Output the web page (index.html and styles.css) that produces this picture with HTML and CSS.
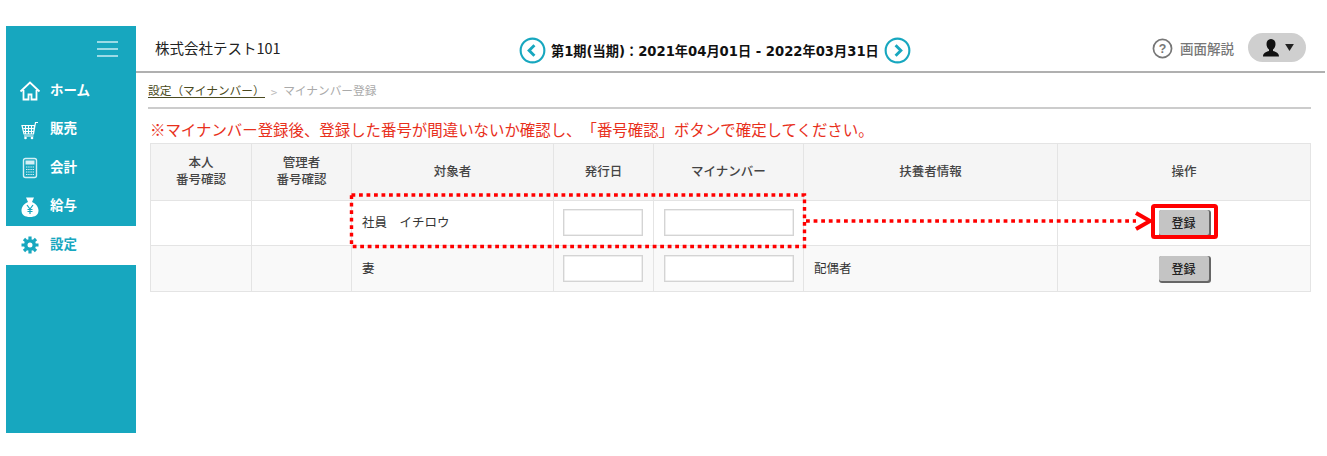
FILE: index.html
```html
<!DOCTYPE html>
<html lang="ja">
<head>
<meta charset="utf-8">
<title>マイナンバー登録</title>
<link rel="stylesheet" href="styles.css">
</head>
<body>
<div class="app">
  <aside class="sidebar">
    <div class="burger"><span></span><span></span><span></span></div>
    <nav class="nav">
      <a class="nav-item"><svg class="nav-icon" viewBox="0 0 22 22"><path d="M1.500 11.500 11 2.500l9.500 9M4.500 10v9.500h5v-5h3v5h5V10" fill="none" stroke="#fff" stroke-width="1.800"/></svg><span>ホーム</span></a>
      <a class="nav-item"><svg class="nav-icon" viewBox="0 0 22 22"><path d="M3 6.500h12.500l-1 8.500H5zM4.500 9.500h10M5 12.500h9.500M6.500 7v8M9.500 7v8M12.500 7v8M5 17h9.500M14.500 15l2-11.500h2.500" fill="none" stroke="#fff" stroke-width="1.200"/><circle cx="6.500" cy="19" r="1.300" fill="#fff"/><circle cx="13" cy="19" r="1.300" fill="#fff"/></svg><span>販売</span></a>
      <a class="nav-item"><svg class="nav-icon" viewBox="0 0 22 22"><rect x="4.500" y="1.500" width="13" height="19" rx="2" fill="none" stroke="#d6f0f5" stroke-width="1.400"/><rect x="6.500" y="3.500" width="9" height="4" fill="#d6f0f5"/><path d="M7 10h8M7 12.500h8M7 15h8M7 17.500h8" stroke="#d6f0f5" stroke-width="1.200" stroke-dasharray="1.400 .8"/></svg><span>会計</span></a>
      <a class="nav-item"><svg class="nav-icon" viewBox="0 0 22 22"><path d="M7 1.500h8l-2 4.500c4 1.500 6.500 5 6.500 8.500 0 4.500-3.500 6.500-8.500 6.500s-8.500-2-8.500-6.500c0-3.500 2.500-7 6.500-8.500z" fill="#fff"/><path d="M8 9l3 4 3-4M11 13v5M8.500 13.500h5M8.500 15.500h5" fill="none" stroke="#17a7bf" stroke-width="1.200"/></svg><span>給与</span></a>
      <a class="nav-item active"><svg class="nav-icon" viewBox="0 0 22 22"><circle cx="11" cy="11" r="4.300" fill="none" stroke="#17a7bf" stroke-width="3.600"/><path d="M11 2.500v3M11 16.500v3M2.500 11h3M16.500 11h3M5 5l2.200 2.200M14.800 14.800 17 17M17 5l-2.200 2.200M7.200 14.800 5 17" stroke="#17a7bf" stroke-width="3.200"/></svg><span>設定</span></a>
    </nav>
  </aside>
  <main class="main">
    <header class="topbar">
      <div class="company">株式会社テスト101</div>
      <div class="period">
        <svg class="circle-btn" viewBox="0 0 28 28"><circle cx="14" cy="14" r="12.300" fill="#fff" stroke="#17a7bf" stroke-width="2.200"/><path d="M16 8.500 10.500 14l5.500 5.500" fill="none" stroke="#17a7bf" stroke-width="3"/></svg>
        <span class="period-text">第1期(当期)：2021年04月01日 - 2022年03月31日</span>
        <svg class="circle-btn" viewBox="0 0 28 28"><circle cx="14" cy="14" r="12.300" fill="#fff" stroke="#17a7bf" stroke-width="2.200"/><path d="M12 8.500 17.500 14 12 19.500" fill="none" stroke="#17a7bf" stroke-width="3"/></svg>
      </div>
      <div class="top-right">
        <svg class="help-icon" viewBox="0 0 22 22"><circle cx="11" cy="11" r="9.500" fill="none" stroke="#777" stroke-width="1.800"/><text x="11" y="15.500" text-anchor="middle" class="help-q">?</text></svg>
        <span class="help-text">画面解説</span>
        <div class="user-pill">
          <svg class="user-icon" viewBox="0 0 20 20"><path d="M10 1c3 0 4.500 2.200 4.500 5 0 2.500-1 4.500-2.500 5.500v1.500c3 .8 6 2 6 5.500H2c0-3.500 3-4.700 6-5.500v-1.500C6.500 10.500 5.500 8.500 5.500 6c0-2.800 1.500-5 4.500-5z" fill="#111"/></svg>
          <svg class="caret" viewBox="0 0 10 8"><path d="M0 0h10L5 8z" fill="#222"/></svg>
        </div>
      </div>
    </header>
    <div class="content">
      <div class="crumbs"><a class="crumb-link">設定（マイナンバー）</a><span class="crumb-sep">&gt;</span><span class="crumb-cur">マイナンバー登録</span></div>
      <p class="notice">※マイナンバー登録後、登録した番号が間違いないか確認し、「番号確認」ボタンで確定してください。</p>
      <table class="grid">
        <colgroup>
          <col class="c1"><col class="c2"><col class="c3"><col class="c4"><col class="c5"><col class="c6"><col class="c7">
        </colgroup>
        <thead>
          <tr><th>本人<br>番号確認</th><th>管理者<br>番号確認</th><th>対象者</th><th>発行日</th><th>マイナンバー</th><th>扶養者情報</th><th>操作</th></tr>
        </thead>
        <tbody>
          <tr class="row-a">
            <td></td><td></td><td class="left up">社員　イチロウ</td>
            <td class="field"><input class="input" type="text"></td>
            <td class="field"><input class="input wide" type="text"></td>
            <td></td>
            <td class="center"><button class="btn" type="button">登録</button></td>
          </tr>
          <tr class="row-b">
            <td></td><td></td><td class="left up">妻</td>
            <td class="field"><input class="input" type="text"></td>
            <td class="field"><input class="input wide" type="text"></td>
            <td class="left up">配偶者</td>
            <td class="center"><button class="btn" type="button">登録</button></td>
          </tr>
        </tbody>
      </table>
    </div>
  </main>
</div>
<svg class="annot" viewBox="0 0 1327 456" width="1327" height="456">
  <rect x="351.500" y="195" width="453" height="51.500" fill="none" stroke="#f00" stroke-width="3.400" stroke-dasharray="3.800 3.700"/>
  <path d="M806 221h330" fill="none" stroke="#f00" stroke-width="3.400" stroke-dasharray="3.800 3.800"/>
  <path d="M1136 213l14 8-14 8" fill="none" stroke="#f00" stroke-width="4"/>
  <rect x="1153" y="206" width="63" height="31" rx="1.500" fill="none" stroke="#f00" stroke-width="4"/>
</svg>
</body>
</html>
```

FILE: styles.css
```css
* { box-sizing: border-box; }
html, body { margin: 0; padding: 0; background: #fff; }
body {
  position: relative;
  width: 1327px;
  height: 456px;
  overflow: hidden;
  font-family: "Noto Sans CJK JP", "Liberation Sans", sans-serif;
  font-size: 12px;
  color: #333;
  text-spacing-trim: space-all;
}
.app { display: flex; padding: 26px 0 0 6px; height: 433px; }

.sidebar { width: 130px; height: 407px; background: #17a7bf; flex: none; }
.burger { display: flex; flex-direction: column; gap: 5px; align-items: flex-end; padding: 15px 18px 0 0; height: 46px; }
.burger span { display: block; width: 21px; height: 2px; background: #9bdbe6; }
.nav { display: flex; flex-direction: column; }
.nav-item { display: flex; align-items: center; height: 38.500px; padding-left: 13px; color: #fff; font-size: 13.500px; font-weight: 700; gap: 9px; }
.nav-item span { margin-bottom: 5px; }
.nav-item.active { background: #fff; color: #17a7bf; }
.nav-icon { width: 22px; height: 22px; flex: none; }

.main { flex: none; width: 1189px; display: flex; flex-direction: column; }
.topbar { height: 47px; border-bottom: 2px solid #b0b0b0; display: flex; align-items: center; padding: 0 19px 2px 19px; }
.company { font-size: 14.500px; color: #222; width: 364px; flex: none; }
.period { display: flex; align-items: center; gap: 5px; margin-top: 5px; }
.period-text { font-family: "DejaVu Sans", "Noto Sans CJK JP", sans-serif; font-size: 13.200px; font-weight: 700; color: #111; white-space: nowrap; }
.circle-btn { width: 27px; height: 27px; flex: none; }
.top-right { display: flex; align-items: center; margin-left: auto; }
.help-icon { width: 21px; height: 21px; margin-top: 1px; }
.help-q { font-size: 13px; font-weight: 700; fill: #777; font-family: "Liberation Sans", sans-serif; }
.help-text { font-size: 13.500px; color: #777; margin: 0 14px 0 7px; font-weight: 500; }
.user-pill { width: 58px; height: 29px; background: #cfcfcf; border-radius: 15px; display: flex; align-items: center; justify-content: center; gap: 4px; }
.user-icon { width: 20px; height: 20px; }
.caret { width: 9px; height: 7px; }

.content { padding: 0 14px; }
.crumbs { height: 36px; border-bottom: 2px solid #ccc; padding-top: 9px; font-size: 11.700px; display: flex; margin-left: -2px; }
.crumb-link { color: #4a4a20; border-bottom: 1px solid #4a4a20; height: 16px; line-height: 15px; }
.crumb-sep { color: #bbb; margin: 0 6px; line-height: 19px; }
.crumb-cur { color: #aaa; line-height: 16px; }
.notice { margin: 9px 0 0; font-size: 15.430px; line-height: 23px; height: 25px; color: #e8301c; white-space: nowrap; }

.grid { border-collapse: collapse; table-layout: fixed; width: 1160px; }
.c1 { width: 101px; } .c2 { width: 100px; } .c3 { width: 202px; } .c4 { width: 100px; } .c5 { width: 150px; } .c6 { width: 254px; } .c7 { width: 253px; }
.grid th, .grid td { border: 1.500px solid #e4e4e4; }
.grid th { height: 57px; background: #f5f5f5; font-size: 12.500px; font-weight: 500; line-height: 17px; color: #444; padding: 0 0 4px; }
.row-a td { height: 45px; background: #fff; }
.row-b td { height: 46px; background: #f9f9f9; }
.grid td { padding: 0; font-size: 12.500px; }
.grid td.left { padding-left: 10px; color: #333; }
.grid td.up { padding-bottom: 3px; }
.field { text-align: center; }
.center { text-align: center; }
.input { width: 80px; height: 27px; margin: 0 2px 1px 0; border: 1px solid #d4d4d4; box-shadow: inset 0 0 0 .5px #ddd; background: #fff; padding: 0; display: inline-block; vertical-align: middle; }
.input.wide { width: 130px; margin-right: 0; }
.btn { width: 50px; height: 25px; margin: 0 1px 1px 0; background: #c4c4c4; border: none; border-radius: 2px; box-shadow: 1px 1px 0 1px #666; font: 500 12px "Noto Sans CJK JP", sans-serif; color: #222; padding: 0; vertical-align: middle; }

.annot { position: absolute; left: 0; top: 0; pointer-events: none; }
```
